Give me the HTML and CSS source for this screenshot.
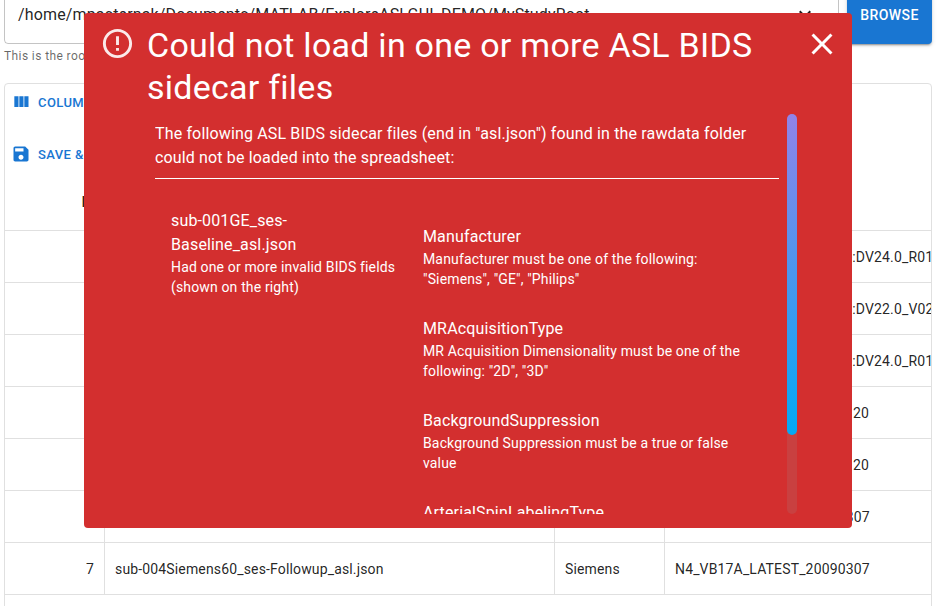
FILE: index.html
```html
<!DOCTYPE html>
<html lang="en">
<head>
  <meta charset="UTF-8">
  <title>ASL BIDS spreadsheet</title>
  <link rel="stylesheet" href="styles.css">
</head>
<body>

<div class="page">
  <div class="path-row">
    <div class="path-input">
      <span class="path-text">/home/mpasternak/Documents/MATLAB/ExploreASLGUI_DEMO/MyStudyRoot</span>
      <svg class="path-arrow" viewBox="0 0 24 24"><path d="M16.59 8.59 12 13.17 7.41 8.59 6 10l6 6 6-6z"/></svg>
    </div>
    <button class="browse-btn">Browse</button>
  </div>
  <p class="helper">This is the root folder of your study</p>

  <div class="card">
    <div class="toolbar">
      <div class="tool-btn">
        <svg class="tool-icon" viewBox="0 0 24 24"><path d="M10 18h5V5h-5v13zm-6 0h5V5H4v13zM16 5v13h5V5h-5z"/></svg>
        Columns
      </div>
      <div class="tool-btn">
        <svg class="tool-icon" viewBox="0 0 24 24"><path d="M17 3H5c-1.11 0-2 .9-2 2v14c0 1.1.89 2 2 2h14c1.1 0 2-.9 2-2V7l-4-4zm-5 16c-1.66 0-3-1.34-3-3s1.34-3 3-3 3 1.34 3 3-1.34 3-3 3zm3-10H5V5h10v4z"/></svg>
        Save &amp; reload
      </div>
    </div>

    <table class="grid">
      <tr class="grid-head">
        <th class="num">ID</th>
        <th>Filename</th>
        <th>Vendor</th>
        <th>Version</th>
      </tr>
      <tr>
        <td class="num">1</td>
        <td>sub-001GE_ses-Baseline_asl.json</td>
        <td>GE</td>
        <td>27_LX_MR Software release:DV24.0_R01_1344.a</td>
      </tr>
      <tr>
        <td class="num">2</td>
        <td>sub-001GE_ses-Followup_asl.json</td>
        <td>GE</td>
        <td>27_LX_MR Software release:DV22.0_V02_1122.a</td>
      </tr>
      <tr>
        <td class="num">3</td>
        <td>sub-002GE_ses-Baseline_asl.json</td>
        <td>GE</td>
        <td>27_LX_MR Software release:DV24.0_R01_1344.a</td>
      </tr>
      <tr>
        <td class="num">4</td>
        <td>sub-003Siemens_ses-Baseline_asl.json</td>
        <td>Siemens</td>
        <td>N4_VE11C_LATEST_20160120</td>
      </tr>
      <tr>
        <td class="num">5</td>
        <td>sub-003Siemens_ses-Followup_asl.json</td>
        <td>Siemens</td>
        <td>N4_VE11C_LATEST_20160120</td>
      </tr>
      <tr>
        <td class="num">6</td>
        <td>sub-004Siemens60_ses-Baseline_asl.json</td>
        <td>Siemens</td>
        <td>N4_VB17A_LATEST_20090307</td>
      </tr>
      <tr>
        <td class="num">7</td>
        <td>sub-004Siemens60_ses-Followup_asl.json</td>
        <td>Siemens</td>
        <td>N4_VB17A_LATEST_20090307</td>
      </tr>
    </table>
    <div class="grid-foot"></div>
  </div>
</div>

<div class="modal">
  <div class="modal-head">
    <svg class="modal-icon" viewBox="0 0 24 24"><path d="M11 15h2v2h-2zm0-8h2v6h-2zm.99-5C6.47 2 2 6.48 2 12s4.47 10 9.99 10C17.52 22 22 17.52 22 12S17.52 2 11.99 2zM12 20c-4.42 0-8-3.58-8-8s3.58-8 8-8 8 3.58 8 8-3.58 8-8 8z"/></svg>
    <h1 class="modal-title">Could not load in one or more ASL BIDS sidecar files</h1>
    <svg class="modal-close" viewBox="0 0 24 24"><path d="M19 6.41 17.59 5 12 10.59 6.41 5 5 6.41 10.59 12 5 17.59 6.41 19 12 13.41 17.59 19 19 17.59 13.41 12z"/></svg>
  </div>

  <div class="modal-body">
    <div class="scroll-area">
      <p class="intro">The following ASL BIDS sidecar files (end in "asl.json") found in the rawdata folder could not be loaded into the spreadsheet:</p>
      <hr class="rule">
      <div class="error-row">
        <div class="error-file">
          <div class="big">sub-001GE_ses-Baseline_asl.json</div>
          <div class="small">Had one or more invalid BIDS fields (shown on the right)</div>
        </div>
        <div class="error-fields">
          <div class="field">
            <div class="big">Manufacturer</div>
            <div class="small">Manufacturer must be one of the following: "Siemens", "GE", "Philips"</div>
          </div>
          <div class="field">
            <div class="big">MRAcquisitionType</div>
            <div class="small">MR Acquisition Dimensionality must be one of the following: "2D", "3D"</div>
          </div>
          <div class="field">
            <div class="big">BackgroundSuppression</div>
            <div class="small">Background Suppression must be a true or false value</div>
          </div>
          <div class="field">
            <div class="big">ArterialSpinLabelingType</div>
            <div class="small">Arterial Spin Labeling Type must be one of the following: "PASL", "CASL", "PCASL"</div>
          </div>
        </div>
      </div>
    </div>
    <div class="scroll-track">
      <div class="scroll-thumb"></div>
    </div>
  </div>
</div>

</body>
</html>
```

FILE: styles.css
```css
html, body {
  height: 606px;
  margin: 0;
  overflow: hidden;
}
body {
  font-family: Roboto, Arial, sans-serif;
  background-color: white;
  color: rgba(0,0,0,0.87);
}
.page {
  margin-top: -13px;
  padding: 0 12px 0 4px;
}
.path-row {
  display: flex;
  gap: 8px;
  height: 57px;
}
.path-input {
  flex: 1;
  min-width: 0;
  display: flex;
  align-items: center;
  justify-content: space-between;
  padding: 0 21px 2px 13px;
  border: 1px solid rgba(0,0,0,0.23);
  border-radius: 4px;
  box-sizing: border-box;
  font-size: 16px;
  letter-spacing: 0.15px;
}
.path-arrow {
  width: 24px;
  height: 24px;
  margin-top: -2px;
  fill: rgba(0,0,0,0.87);
}
.browse-btn {
  width: 85px;
  padding: 0 0 2px;
  border: none;
  border-radius: 4px;
  background-color: #1976d2;
  color: white;
  font-family: inherit;
  font-size: 14px;
  font-weight: 500;
  letter-spacing: 0.4px;
  text-transform: uppercase;
  box-shadow: 0 3px 1px -2px rgba(0,0,0,0.2), 0 2px 2px 0 rgba(0,0,0,0.14), 0 1px 5px 0 rgba(0,0,0,0.12);
}
.helper {
  margin: 2px 0 0;
  height: 37px;
  font-size: 12px;
  line-height: 20px;
  letter-spacing: 0.4px;
  color: rgba(0,0,0,0.6);
}
.card {
  border: 1px solid #e0e0e0;
  border-radius: 4px;
  overflow: hidden;
}
.toolbar {
  display: flex;
  flex-direction: column;
  gap: 20px;
  padding: 2px 6px 4px;
}
.tool-btn {
  display: flex;
  align-items: center;
  gap: 7px;
  height: 32px;
  font-size: 13px;
  font-weight: 500;
  letter-spacing: 0.4px;
  text-transform: uppercase;
  color: #1976d2;
}
.tool-icon {
  width: 20px;
  height: 20px;
  fill: #1976d2;
}
.grid {
  table-layout: fixed;
  width: 926px;
  border-spacing: 0;
  font-size: 14px;
  letter-spacing: 0.15px;
}
.grid th, .grid td {
  height: 52px;
  padding: 0 10px;
  box-sizing: border-box;
  border-bottom: 1px solid #e0e0e0;
  border-right: 1px solid #e0e0e0;
  text-align: left;
  white-space: nowrap;
  overflow: hidden;
}
.grid th:first-child, .grid td:first-child {
  width: 100px;
}
.grid th:nth-child(2), .grid td:nth-child(2) {
  width: 450px;
}
.grid th:nth-child(3), .grid td:nth-child(3) {
  width: 110px;
}
.grid th:last-child, .grid td:last-child {
  border-right: none;
}
.grid .grid-head th {
  height: 57px;
  font-weight: 500;
  border-right: none;
}
.grid .num {
  text-align: right;
}
.grid-foot {
  height: 52px;
}

/* error dialog over the page */
.modal {
  position: absolute;
  left: 84px;
  top: 13px;
  width: 768px;
  height: 515px;
  background-color: #d32f2f;
  border-radius: 4px;
  color: white;
}
.modal-head {
  display: flex;
  align-items: flex-start;
  height: 101px;
  padding: 11px 12px 0 16px;
  box-sizing: border-box;
}
.modal-icon {
  flex: none;
  width: 35px;
  height: 35px;
  margin: 2px 12px 0 0;
  fill: rgba(255,255,255,0.9);
}
.modal-title {
  flex: 1;
  margin: 0;
  font-size: 34px;
  font-weight: 400;
  line-height: 42px;
  letter-spacing: 0.25px;
}
.modal-close {
  flex: none;
  width: 36px;
  height: 36px;
  margin-top: 2px;
  fill: white;
}
.modal-body {
  display: flex;
  height: 400px;
  padding-left: 71px;
}
.scroll-area {
  width: 624px;
  height: 400px;
  overflow: hidden;
  padding-top: 8px;
  box-sizing: border-box;
  letter-spacing: 0.15px;
}
.intro {
  margin: 0;
  font-size: 16px;
  line-height: 24px;
}
.rule {
  margin: 8px 0 0;
  border: none;
  border-top: 1px solid white;
}
.error-row {
  display: flex;
  gap: 26px;
  padding: 30px 0 0 16px;
}
.error-file {
  flex: none;
  width: 226px;
}
.error-fields {
  flex: none;
  width: 330px;
  padding-top: 16px;
}
.field {
  margin-bottom: 28px;
}
.big {
  font-size: 16px;
  line-height: 24px;
}
.small {
  font-size: 14px;
  line-height: 20px;
}
.scroll-track {
  width: 10px;
  height: 400px;
  margin-left: 8px;
  border-radius: 5px;
  background-color: #c94040;
}
.scroll-thumb {
  height: 321px;
  border-radius: 5px;
  background: linear-gradient(#9183e8, #03a9f4);
}
```
